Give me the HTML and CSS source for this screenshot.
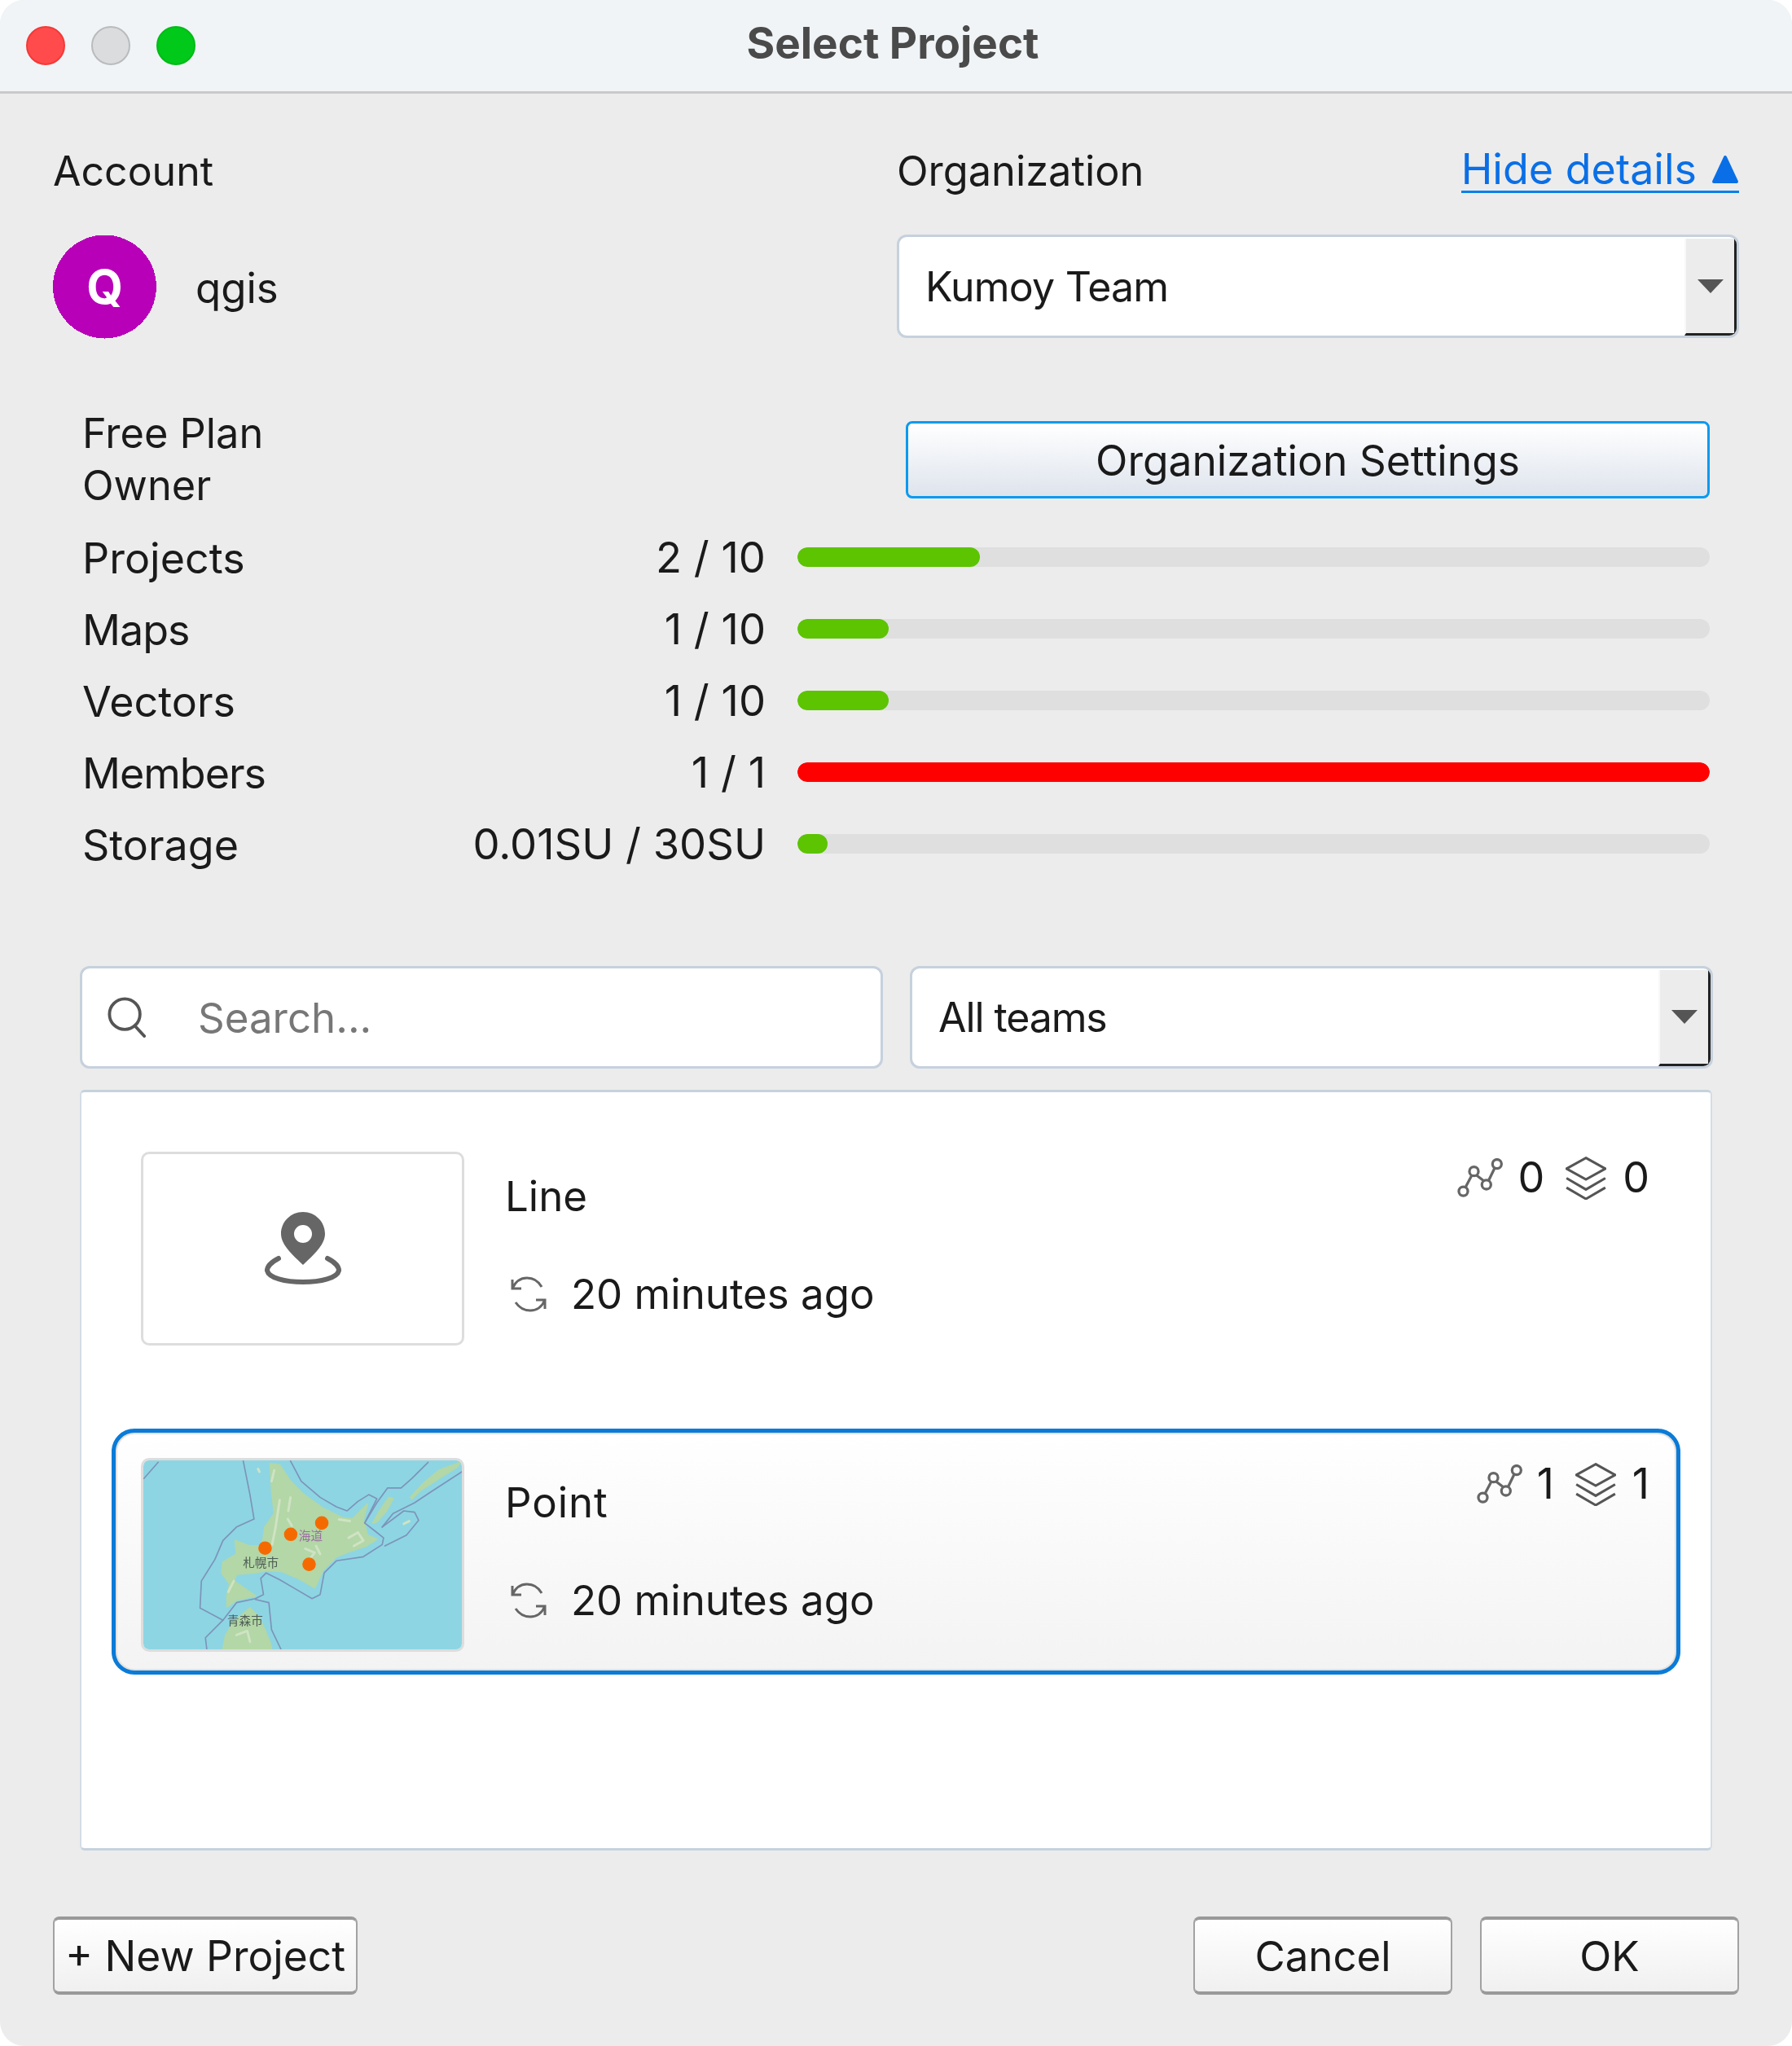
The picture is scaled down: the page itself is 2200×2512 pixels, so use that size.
FILE: index.html
```html
<!DOCTYPE html>
<html lang="en">
<head>
<meta charset="utf-8">
<title>Select Project</title>
<link rel="stylesheet" href="styles.css">
</head>
<body>
<div class="window">
  <header class="titlebar">
    <div class="lights"><span class="light red"></span><span class="light grey"></span><span class="light green"></span></div>
    <div class="title">Select Project</div>
    <div></div>
  </header>

  <section class="account">
    <div class="acct-col">
      <div class="head-label">Account</div>
      <div class="acct-user">
        <svg class="avatar" viewBox="0 0 128 128"><circle cx="64" cy="64" r="64" fill="#b800b8" shape-rendering="crispEdges"/><text x="64" y="85" text-anchor="middle" class="avatar-q">Q</text></svg>
        <span class="acct-name">qgis</span>
      </div>
    </div>
    <div class="org-col">
      <div class="org-head">
        <div class="head-label org-label">Organization</div>
        <a class="details-link">Hide details <svg class="up" viewBox="0 0 34 36"><path d="M17 3 L31 33 H3 Z" fill="#0a6fe6" stroke="#0a6fe6" stroke-width="4" stroke-linejoin="round"/></svg></a>
      </div>
      <div class="combo org-combo">
        <span class="combo-text">Kumoy Team</span>
        <span class="combo-btn"><svg class="tri" viewBox="0 0 32 17"><path d="M0 0H32L16 17Z"/></svg></span>
      </div>
    </div>
  </section>

  <section class="details">
    <div class="plan-row">
      <div class="plan-text"><div>Free Plan</div><div>Owner</div></div>
      <button class="settings-btn">Organization Settings</button>
    </div>
    <div class="usage"><span class="u-label">Projects</span><span class="u-value">2 / 10</span><span class="track"><span class="fill ok" style="width:20%"></span></span></div>
    <div class="usage"><span class="u-label narrow">Maps</span><span class="u-value">1 / 10</span><span class="track"><span class="fill ok" style="width:10%"></span></span></div>
    <div class="usage"><span class="u-label">Vectors</span><span class="u-value">1 / 10</span><span class="track"><span class="fill ok" style="width:10%"></span></span></div>
    <div class="usage"><span class="u-label narrow">Members</span><span class="u-value">1 / 1</span><span class="track"><span class="fill over" style="width:100%"></span></span></div>
    <div class="usage"><span class="u-label">Storage</span><span class="u-value">0.01SU / 30SU</span><span class="track"><span class="fill ok" style="width:3.3%"></span></span></div>
  </section>

  <section class="filters">
    <div class="combo search">
      <svg class="search-ico" viewBox="0 0 50 52"><circle cx="22" cy="22" r="19.5" fill="none" stroke="#555" stroke-width="4"/><path d="M35 37 L47 50" stroke="#555" stroke-width="4" stroke-linecap="round"/></svg>
      <span class="placeholder">Search...</span>
    </div>
    <div class="combo team-combo">
      <span class="combo-text team-text">All teams</span>
      <span class="combo-btn"><svg class="tri" viewBox="0 0 32 17"><path d="M0 0H32L16 17Z"/></svg></span>
    </div>
  </section>

  <section class="list">
    <article class="item">
      <div class="thumb">
        <svg class="pin" viewBox="0 0 94 90">
          <path fill="#666" fill-rule="evenodd" d="M47 0C32 0 20 12 20 27C20 42 38 56 47 65C56 56 74 42 74 27C74 12 62 0 47 0ZM47 16A11 11 0 1 1 47 38A11 11 0 1 1 47 16Z"/>
          <path fill="none" stroke="#666" stroke-width="6" stroke-linecap="round" d="M17 57C7 62 3 68 3 72C5 81 25 86 47 86C69 86 89 81 91 72C91 68 87 62 77 57"/>
        </svg>
      </div>
      <div class="info">
        <div class="name">Line</div>
        <div class="time">
          <svg class="sync" viewBox="0 0 44 44"><path fill="none" stroke="#666" stroke-width="3" d="M2 4V15H13M2 15C6 6 12 2 20 2C28 2 34 6 38 13M42 40V29H31M42 29C38 38 32 42 24 42C16 42 10 38 6 32"/></svg>
          <span>20 minutes ago</span>
        </div>
      </div>
      <div class="stats">
        <svg class="net" viewBox="340 226 172 146"><g fill="none" stroke="#666" stroke-width="10"><circle cx="363" cy="350" r="17"/><circle cx="403" cy="275" r="17"/><circle cx="450" cy="325" r="17"/><circle cx="490" cy="247" r="17"/><path d="M371 335L395 290M413 290L439 310M459 308L481 263"/></g></svg>
        <span class="digit">0</span>
        <svg class="layers" viewBox="700 220 150 160"><g fill="none" stroke="#555" stroke-width="9"><path d="M775 225L847 265L775 305L703 265Z"/><path d="M703 300L775 342L847 300"/><path d="M703 335L775 377L847 335"/></g></svg>
        <span class="digit">0</span>
      </div>
    </article>

    <article class="item selected">
      <div class="thumb">
        <svg class="map" viewBox="135 153 1180 700" preserveAspectRatio="none">
          <rect x="135" y="153" width="1180" height="700" fill="#8dd5e3"/>
          <g fill="#b3d7a6" stroke="#b3d7a6" stroke-width="6" stroke-linejoin="round">
            <path d="M605 165L640 170L680 230L730 280L800 330L870 365L910 370L965 315L950 370L965 430L1000 445L960 470L900 490L850 510L800 560L770 625L710 590L650 565L600 560L540 570L480 575L470 600L500 620L550 655L480 670L445 695L445 650L455 610L425 570L430 530L480 500L475 450L530 470L575 470L585 400L620 350L610 260Z"/>
            <path d="M985 385L1010 340L1045 290L1060 295L1035 340L1000 380Z"/>
            <path d="M1125 290L1170 240L1230 190L1310 160L1300 175L1230 220L1160 265L1130 295Z"/>
            <path d="M430 853L440 800L470 750L530 700L560 730L585 780L605 830L610 853Z"/>
          </g>
          <g fill="none" stroke="#cfe3c4" stroke-width="9" stroke-linecap="round" stroke-linejoin="round">
            <path d="M670 370L685 395M640 300L625 400L612 465M680 290L672 340"/>
            <path d="M735 480L770 495L750 520M775 470L790 500"/>
            <path d="M895 440L930 420L950 450L915 470M860 372L900 378"/>
            <path d="M480 800L520 785L530 825M450 640L470 600M1100 388L1120 378"/>
            <path d="M620 190L610 230M560 185L565 195"/>
          </g>
          <g fill="none" stroke="#7d93b9" stroke-width="5" stroke-linejoin="round" stroke-linecap="round">
            <path d="M505 155L530 280L545 370L480 400L430 450L400 520L350 600L345 700L430 745L365 810L370 853"/>
            <path d="M680 155L720 230L790 290L850 325L890 340L930 305L970 280L1000 295L975 345L955 385L1000 420L1025 440L1020 465L950 510L850 525L805 570L790 650L760 665L700 630L640 595L590 570L570 590L580 650L550 665L480 680L430 745"/>
            <path d="M550 668L600 680L610 780L645 853"/>
            <path d="M955 385L1000 310L1040 255L1090 255L1130 220L1190 160"/>
            <path d="M1020 400L1100 340L1140 345L1155 375L1110 430L1030 470"/>
            <path d="M1020 400L1060 350L1140 310L1200 270L1315 195"/>
            <path d="M137 220L190 160"/>
          </g>
          <text x="570" y="548" text-anchor="middle" class="map-label">札幌市</text>
          <text x="512" y="764" text-anchor="middle" class="map-label">青森市</text>
          <text x="755" y="450" text-anchor="middle" class="map-label purple">海道</text>
          <g fill="#f56a00"><circle cx="586" cy="478" r="25"/><circle cx="681" cy="427" r="25"/><circle cx="796" cy="385" r="25"/><circle cx="749" cy="538" r="25"/></g>
        </svg>
      </div>
      <div class="info">
        <div class="name">Point</div>
        <div class="time">
          <svg class="sync" viewBox="0 0 44 44"><path fill="none" stroke="#666" stroke-width="3" d="M2 4V15H13M2 15C6 6 12 2 20 2C28 2 34 6 38 13M42 40V29H31M42 29C38 38 32 42 24 42C16 42 10 38 6 32"/></svg>
          <span>20 minutes ago</span>
        </div>
      </div>
      <div class="stats">
        <svg class="net" viewBox="340 226 172 146"><g fill="none" stroke="#666" stroke-width="10"><circle cx="363" cy="350" r="17"/><circle cx="403" cy="275" r="17"/><circle cx="450" cy="325" r="17"/><circle cx="490" cy="247" r="17"/><path d="M371 335L395 290M413 290L439 310M459 308L481 263"/></g></svg>
        <span class="digit">1</span>
        <svg class="layers" viewBox="700 220 150 160"><g fill="none" stroke="#555" stroke-width="9"><path d="M775 225L847 265L775 305L703 265Z"/><path d="M703 300L775 342L847 300"/><path d="M703 335L775 377L847 335"/></g></svg>
        <span class="digit">1</span>
      </div>
    </article>
  </section>

  <footer class="footer">
    <button class="btn new">+ New Project</button>
    <div class="footer-right">
      <button class="btn act">Cancel</button>
      <button class="btn act">OK</button>
    </div>
  </footer>
</div>
</body>
</html>
```
FILE: styles.css
```css
* { box-sizing: border-box; }
html, body { margin: 0; padding: 0; background: #fff; }
body { font-family: Inter, "Liberation Sans", sans-serif; font-size: 50px; color: #1a1a1a; }
button { font: inherit; color: inherit; padding: 0; }

.window { width: 2200px; height: 2512px; background: #ececec; border-radius: 30px; overflow: hidden; display: flex; flex-direction: column; }

.titlebar { height: 115px; flex: none; background: #f0f4f7; border-bottom: 3px solid #c9c9c9; display: grid; grid-template-columns: 1fr auto 1fr; align-items: center; padding-bottom: 6px; }
.lights { display: flex; gap: 32px; margin: 6px 0 0 32px; }
.light { width: 48px; height: 48px; border-radius: 50%; border: 2px solid; }
.red { background: #ff4b4b; border-color: #f53838; }
.grey { background: #dadcde; border-color: #b9bbbd; }
.green { background: #00c91a; border-color: #00bb16; }
.title { font-weight: 700; font-size: 53px; color: #4a4a4a; line-height: 60px; margin-right: 8px; }

.account { display: flex; padding: 0 65px; margin-top: 65px; flex: none; }
.acct-col { width: 1036px; }
.org-col { width: 1034px; }
.head-label { line-height: 60px; height: 60px; }
.org-label { font-size: 50.5px; }
.acct-user { display: flex; align-items: center; gap: 48px; margin-top: 48px; height: 128px; }
.acct-name { font-size: 51px; padding-top: 2px; }
.avatar { width: 127px; height: 128px; display: block; }
.avatar-q { font-family: Inter, sans-serif; font-weight: 700; font-size: 58px; fill: #fff; }
.org-head { display: flex; justify-content: space-between; }
.details-link { color: #0a6fe6; font-size: 52px; display: flex; align-items: center; gap: 18px; height: 57px; padding-top: 2px; border-bottom: 3px solid #0a80ea; line-height: 50px; }
.up { width: 34px; height: 36px; display: block; }

.combo { display: flex; align-items: center; background: #fff; border: 3px solid #c6d1dd; border-radius: 12px; overflow: hidden; }
.org-combo { width: 1034px; height: 127px; margin-top: 48px; }
.combo-text { flex: 1; padding-left: 32px; letter-spacing: -0.8px; }
.team-text { letter-spacing: -1.1px; }
.combo-btn { width: 64px; align-self: stretch; margin-top: 2px; background: #ececec; border-left: 2px solid #f8f8f8; border-right: 3px solid #222; border-bottom: 3px solid #222; display: flex; align-items: center; justify-content: center; }
.tri { width: 32px; height: 17px; display: block; fill: #555; }

.details { padding: 0 101px; margin-top: 84px; flex: none; }
.plan-row { display: flex; justify-content: space-between; align-items: center; height: 128px; margin-bottom: 12px; }
.plan-text { line-height: 64px; font-size: 50.5px; }
.settings-btn { width: 987px; height: 95px; border: 3px solid #0a9af0; border-radius: 8px; background: linear-gradient(#fff, #dee4ed); font-size: 51.5px; padding-top: 2px; }
.usage { display: flex; align-items: center; height: 88px; }
.u-label { width: 400px; font-size: 52px; margin-top: 2px; }
.narrow { letter-spacing: -1px; }
.u-value { flex: 1; text-align: right; margin-right: 39px; font-size: 52.5px; }
.track { width: 1120px; height: 24px; border-radius: 12px; background: #dfdfdf; overflow: hidden; display: block; }
.fill { display: block; height: 100%; border-radius: 12px; }
.ok { background: #5cc400; }
.over { background: #ff0000; }

.filters { display: flex; gap: 33px; margin: 106px 0 0 98px; flex: none; }
.search { width: 986px; height: 126px; }
.search-ico { width: 48px; height: 50px; margin-left: 31px; display: block; }
.placeholder { margin-left: 63px; color: #777; font-size: 51px; }
.team-combo { width: 986px; height: 126px; }

.list { width: 2004px; height: 934px; margin: 26px 0 0 98px; flex: none; background: #fff; border: 2px solid #d3dde7; border-top: 3px solid #c5d2de; border-bottom: 3px solid #c5d2de; border-radius: 6px; padding: 37px 0 0 37px; }
.item { width: 1926px; height: 302px; border: 5px solid transparent; border-radius: 28px; display: flex; padding: 31px 33px 0 31px; }
.item + .item { margin-top: 74px; }
.selected { border-color: #0a7bd8; background: linear-gradient(#fff, #f3f3f3); box-shadow: inset 0 0 0 2px #e6e0da; }
.selected .name { letter-spacing: 0.9px; }
.thumb { width: 397px; height: 238px; flex: none; background: #fff; border: 3px solid #ddd; border-radius: 10px; overflow: hidden; display: flex; align-items: center; justify-content: center; }
.pin { width: 94px; height: 90px; display: block; }
.map { width: 100%; height: 100%; display: block; filter: blur(0.7px); }
.map-label { font-family: "Noto Sans CJK JP", sans-serif; font-size: 44px; fill: #4d5a55; }
.purple { fill: #9a6fa0; }
.info { margin-left: 50px; padding-top: 25px; font-size: 51px; }
.name { line-height: 60px; }
.time { display: flex; align-items: center; gap: 30px; margin: 60px 0 0 7px; line-height: 60px; }
.sync { width: 44px; height: 44px; display: block; }
.stats { margin-left: auto; display: flex; align-items: center; height: 50px; margin-top: 7px; font-size: 52px; }
.net { width: 56px; height: 48px; display: block; margin-right: 18px; }
.layers { width: 50px; height: 53px; display: block; margin: 0 20px 0 26px; }
.digit { line-height: 50px; }

.footer { display: flex; justify-content: space-between; padding: 0 65px; margin-top: 81px; flex: none; }
.footer-right { display: flex; gap: 34px; }
.btn { height: 96px; border: 2px solid #a2a2a2; border-top: 4px solid #999; border-bottom: 4px solid #999; border-radius: 8px; background: linear-gradient(#fff, #f0f0f0); font-size: 51px; }
.new { width: 374px; font-size: 51.5px; }
.act { width: 318px; }
```
